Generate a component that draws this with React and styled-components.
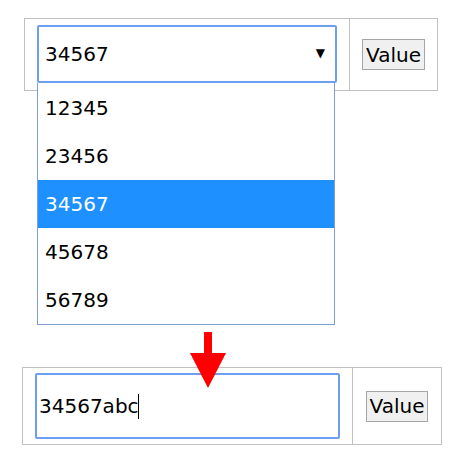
import styled, { createGlobalStyle } from "styled-components";

const GlobalStyle = createGlobalStyle`
  body {
    margin: 0;
    background: #ffffff;
    font-family: "DejaVu Sans", Verdana, sans-serif;
    color: #000000;
  }
`;

const options = ["12345", "23456", "34567", "45678", "56789"];

export default function App() {
  return (
    <Page>
      <GlobalStyle />
      <Row $left={24} $width={414} $height={73}>
        <FieldCell $width={325} $pad={12}>
          <SelectWrap>
            <SelectBox>
              <span>34567</span>
              <Caret>▼</Caret>
            </SelectBox>
            <DropList>
              {options.map((o) => (
                <Option key={o} $active={o === "34567"}>
                  {o}
                </Option>
              ))}
            </DropList>
          </SelectWrap>
        </FieldCell>
        <ButtonCell>
          <ValueButton>Value</ValueButton>
        </ButtonCell>
      </Row>

      <BottomArea>
        <DownArrow width="36" height="56" viewBox="0 0 36 56">
          <rect x="14" y="0" width="8" height="22" fill="#ff0000" />
          <polygon points="0,21 36,21 18,56" fill="#ff0000" />
        </DownArrow>
        <Row $left={22} $width={420} $height={78}>
          <FieldCell $width={330} $pad={12}>
            <TextBox>
              34567abc
              <TextCaret />
            </TextBox>
          </FieldCell>
          <ButtonCell>
            <ValueButton>Value</ValueButton>
          </ButtonCell>
        </Row>
      </BottomArea>
    </Page>
  );
}

const Page = styled.div`
  width: 462px;
  height: 472px;
  padding-top: 18px;
  box-sizing: border-box;
`;

const Row = styled.div`
  display: flex;
  margin-left: ${(p) => p.$left}px;
  width: ${(p) => p.$width}px;
  height: ${(p) => p.$height}px;
  border: 1px solid #c0c0c0;
  box-sizing: border-box;
`;

const FieldCell = styled.div`
  width: ${(p) => p.$width}px;
  padding: 0 ${(p) => p.$pad}px;
  border-right: 1px solid #c0c0c0;
  display: flex;
  align-items: center;
  box-sizing: border-box;
`;

const ButtonCell = styled.div`
  flex: 1;
  display: flex;
  align-items: center;
  justify-content: center;
`;

const ValueButton = styled.button`
  font-family: "DejaVu Sans", Verdana, sans-serif;
  font-size: 20px;
  height: 31px;
  padding: 0 3px;
  background: #f0f0f0;
  border: 1px solid #a6a6a6;
  border-radius: 0;
  color: #000;
`;

const SelectWrap = styled.div`
  position: relative;
  width: 300px;
  margin-top: -1px;
`;

const SelectBox = styled.div`
  height: 58px;
  border: 2px solid #6d9eef;
  border-radius: 2px;
  box-sizing: border-box;
  display: flex;
  align-items: center;
  justify-content: space-between;
  padding: 0 10px 0 6px;
  font-size: 20px;
`;

const Caret = styled.span`
  font-size: 12px;
  margin-top: -2px;
`;

const DropList = styled.div`
  position: absolute;
  top: 58px;
  left: 0;
  width: 298px;
  border: 1px solid #7f9dd3;
  border-top: none;
  background: #fff;
  box-sizing: border-box;
  padding-top: 1px;
`;

const Option = styled.div`
  height: 48px;
  display: flex;
  align-items: center;
  padding-left: 7px;
  font-size: 20px;
  background: ${(p) => (p.$active ? "#1e90ff" : "#fff")};
  color: ${(p) => (p.$active ? "#fff" : "#000")};
`;

const BottomArea = styled.div`
  position: relative;
  margin-top: 276px;
`;

const DownArrow = styled.svg`
  position: absolute;
  left: 190px;
  top: -35px;
  z-index: 2;
`;

const TextBox = styled.div`
  width: 306px;
  height: 66px;
  border: 2px solid #6d9eef;
  border-radius: 2px;
  box-sizing: border-box;
  display: flex;
  align-items: center;
  padding-left: 2px;
  font-size: 20px;
`;

const TextCaret = styled.span`
  display: inline-block;
  width: 1px;
  height: 25px;
  background: #000;
  margin-left: -1px;
`;
